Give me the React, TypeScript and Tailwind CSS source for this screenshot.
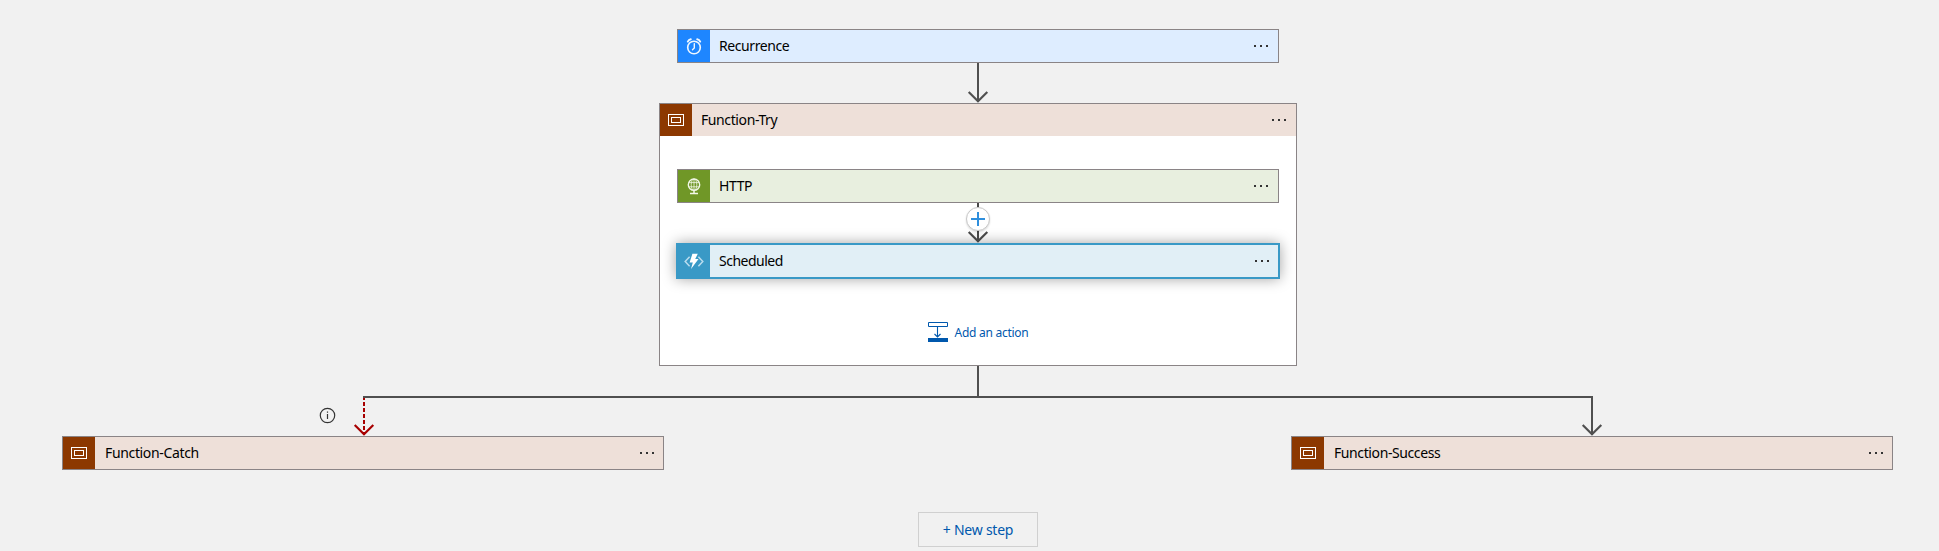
import React from "react";

const label = "font-['Noto_Sans','Open_Sans',sans-serif] whitespace-nowrap leading-none";

function Dots({ className = "" }: { className?: string }) {
  return (
    <div className={`ml-auto flex gap-[4px] ${className}`}>
      <span className="h-[2px] w-[2px] bg-[#333]" />
      <span className="h-[2px] w-[2px] bg-[#333]" />
      <span className="h-[2px] w-[2px] bg-[#333]" />
    </div>
  );
}

function ScopeIcon() {
  return (
    <svg width="16" height="12" viewBox="0 0 16 12" fill="none" stroke="#fff" shapeRendering="crispEdges">
      <rect x="0.5" y="0.5" width="15" height="11" />
      <rect x="3.5" y="3.5" width="9" height="5" />
    </svg>
  );
}

function ClockIcon() {
  return (
    <svg width="16" height="17" viewBox="0 0 16 17" fill="none" stroke="#f0f7ff" strokeLinecap="round">
      <circle cx="8" cy="9.5" r="6.3" strokeWidth="1.6" />
      <path d="M8.3 5.6v4.4L6.5 11.8" strokeWidth="1.4" />
      <path d="M1.8 3.6C2.4 2.3 3.4 1.5 4.8 1.3M14.2 3.6C13.6 2.3 12.6 1.5 11.2 1.3" strokeWidth="1.9" />
    </svg>
  );
}

function GlobeIcon() {
  return (
    <svg width="14" height="17" viewBox="0 0 14 17" fill="none" stroke="#f2f7e8">
      <circle cx="7" cy="6.7" r="5.7" strokeWidth="1.4" />
      <ellipse cx="7" cy="6.7" rx="2.8" ry="5.7" strokeWidth="0.8" />
      <path d="M7 1v11.4M1.8 4.6h10.4M1.8 8.8h10.4" strokeWidth="0.8" />
      <path d="M7 12.4v2.6M3 15.5h8" strokeWidth="1.5" />
    </svg>
  );
}

function FunctionIcon() {
  return (
    <svg width="20" height="17" viewBox="0 0 20 17" fill="none">
      <path d="M5.6 3.8L1.2 8.5l4.4 4.7M14.4 3.8l4.4 4.7-4.4 4.7" stroke="#b9dcee" strokeWidth="1.5" />
      <path d="M8.4 0.8h5.4L11.2 6h3.3L7 16l1.8-6.6H5.6z" fill="#fff" />
    </svg>
  );
}

function ArrowHead({ color }: { color: string }) {
  return (
    <svg className="-mt-[11px] shrink-0" width="22" height="12" viewBox="0 0 22 12" fill="none" stroke={color} strokeWidth="2.2">
      <path d="M1.7 1L11 10.2L20.3 1" />
    </svg>
  );
}

function Icon({ bg, children }: { bg: string; children: React.ReactNode }) {
  return <div className={`flex h-[32px] w-[32px] shrink-0 items-center justify-center ${bg}`}>{children}</div>;
}

function Title({ className, children }: { className: string; children: React.ReactNode }) {
  return <span className={`${label} text-[14px] text-black ${className}`}>{children}</span>;
}

function Card({ className, children }: { className: string; children: React.ReactNode }) {
  return (
    <div className={`flex h-[34px] w-[602px] shrink-0 items-center border border-[#8a8486] ${className}`}>
      {children}
    </div>
  );
}

export default function App() {
  return (
    <div className="h-[551px] w-full overflow-hidden bg-[#f1f1f1] pl-[62px] pt-[29px]">
      <div className="flex w-[1832px] flex-col items-center">
        <Card className="bg-[#deedff]">
          <Icon bg="bg-[#1e86ff]"><ClockIcon /></Icon>
          <Title className="ml-[9px] tracking-[-0.42px]">Recurrence</Title>
          <Dots className="mr-[10px]" />
        </Card>

        <div className="flex h-[40px] flex-col items-center">
          <div className="h-[39px] w-[2px] shrink-0 bg-[#505050]" />
          <ArrowHead color="#505050" />
        </div>

        <section className="flex h-[263px] w-[638px] flex-col items-center border border-[#8a8486] bg-white">
          <header className="flex h-[32px] w-full items-center bg-[#eee0d9]">
            <Icon bg="bg-[#8c3800]"><ScopeIcon /></Icon>
            <Title className="ml-[9px] tracking-[-0.4px]">Function-Try</Title>
            <Dots className="mr-[10px]" />
          </header>
          <Card className="mt-[33px] bg-[#e8efdf]">
            <Icon bg="bg-[#709727]"><GlobeIcon /></Icon>
            <Title className="ml-[9px] tracking-[-0.4px]">HTTP</Title>
            <Dots className="mr-[10px]" />
          </Card>
          <div className="relative z-10 flex h-[40px] flex-col items-center">
            <div className="h-[39px] w-[2px] shrink-0 bg-[#484848]" />
            <ArrowHead color="#484848" />
            <div className="absolute top-[4px] flex h-[24px] w-[24px] items-center justify-center rounded-full border border-[#c8c8c8] bg-white shadow-[0_1px_2px_rgba(0,0,0,0.15)]">
              <svg width="14" height="14" viewBox="0 0 14 14" stroke="#2f8fdd" strokeWidth="2">
                <path d="M7 0v14M0 7h14" />
              </svg>
            </div>
          </div>
          <div className="flex h-[36px] w-[604px] shrink-0 items-center border-2 border-[#3999c6] bg-[#e1eff6] shadow-[0_0_14px_0_rgba(0,0,0,0.36)]">
            <Icon bg="bg-[#3999c6]"><FunctionIcon /></Icon>
            <Title className="ml-[9px] tracking-[-0.5px]">Scheduled</Title>
            <Dots className="mr-[9px]" />
          </div>
          <button className="mt-[43px] flex h-[20px] items-center gap-[7px]">
            <svg width="20" height="20" viewBox="0 0 20 20" fill="none" stroke="#0058ad">
              <path d="M0.5 0.5h19v4h-19z" />
              <path d="M9.5 5v10M6.5 12l3 3 3-3" strokeWidth="1.1" />
              <path d="M0 16h20v4H0z" fill="#0058ad" stroke="none" />
            </svg>
            <span className={`${label} pt-[2px] text-[12px] tracking-[-0.28px] text-[#0058ad]`}>Add an action</span>
          </button>
        </section>

        <div className="h-[30px] w-[2px] bg-[#505050]" />
        <div className="h-[2px] w-[1230px] bg-[#505050]" />
        <div className="flex h-[38px] w-[1250px] justify-between">
          <div className="relative flex flex-col items-center">
            <svg className="shrink-0" width="2" height="37" viewBox="0 0 2 37" stroke="#a80000" strokeWidth="2">
              <path d="M1 0v37" strokeDasharray="4 2" strokeDashoffset="2" />
            </svg>
            <ArrowHead color="#a80000" />
            <svg className="absolute right-[39px] top-[9px]" width="17" height="17" viewBox="0 0 17 17" fill="none" stroke="#333">
              <circle cx="8.5" cy="8.5" r="7.2" strokeWidth="1.2" />
              <path d="M8.5 7v5M8.5 4.6v1.2" strokeWidth="1.2" />
            </svg>
          </div>
          <div className="flex flex-col items-center">
            <div className="h-[37px] w-[2px] shrink-0 bg-[#505050]" />
            <ArrowHead color="#505050" />
          </div>
        </div>

        <div className="flex w-full justify-between pr-px">
          <Card className="bg-[#eee0d9]">
            <Icon bg="bg-[#8c3800]"><ScopeIcon /></Icon>
            <Title className="ml-[10px] tracking-[-0.35px]">Function-Catch</Title>
            <Dots className="mr-[9px]" />
          </Card>
          <Card className="bg-[#eee0d9]">
            <Icon bg="bg-[#8c3800]"><ScopeIcon /></Icon>
            <Title className="ml-[10px] tracking-[-0.4px]">Function-Success</Title>
            <Dots className="mr-[9px]" />
          </Card>
        </div>

        <button className="mt-[42px] flex h-[35px] w-[120px] items-center justify-center border border-[#d0d0d0]">
          <span className={`${label} text-[14px] tracking-[-0.25px] text-[#0058ad]`}>+ New step</span>
        </button>
      </div>
    </div>
  );
}
